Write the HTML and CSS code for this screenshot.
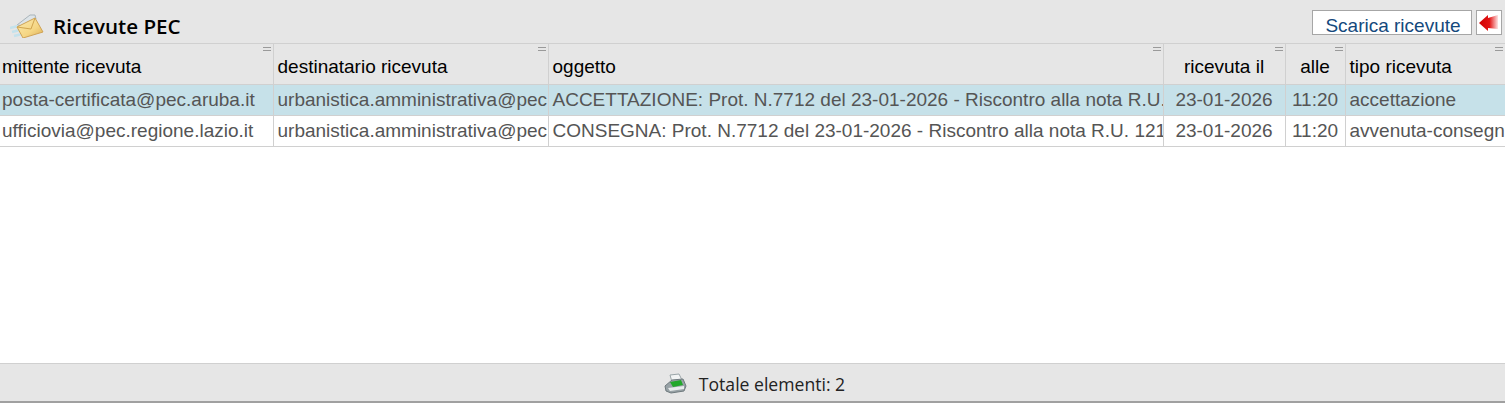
FILE: index.html
```html
<!DOCTYPE html>
<html lang="it">
<head>
    <meta charset="UTF-8">
    <meta name="viewport" content="width=device-width, initial-scale=1.0">
    <title>Ricevute PEC</title>
    <link rel="stylesheet" href="styles.css">
</head>
<body>
    <div class="title-bar">
        <svg class="title-icon" width="34" height="26" viewBox="0 0 34 26">
            <defs>
                <linearGradient id="env" x1="0" y1="0" x2="1" y2="1">
                    <stop offset="0" stop-color="#fbeab0"/>
                    <stop offset="0.6" stop-color="#f5d684"/>
                    <stop offset="1" stop-color="#dcae55"/>
                </linearGradient>
            </defs>
            <path d="M7 13 L20 3 L25 3 L26 7 L14 14 Z" fill="#dde4e8" stroke="#a9b4ba" stroke-width="1"/>
            <path d="M0 16 L8 14 M2 20 L10 18 M4 24 L12 22" stroke="#c4e2ec" stroke-width="2.5" fill="none"/>
            <path d="M7 15 L25 6 L33 20 L13 26 Z" fill="url(#env)" stroke="#cfa356" stroke-width="1"/>
            <path d="M7 15 L21 17 L25 6" fill="none" stroke="#d0a44e" stroke-width="1"/>
        </svg>
        <h1 class="title">Ricevute PEC</h1>
        <div class="title-actions">
            <button class="btn-download">Scarica ricevute</button>
            <button class="btn-back">
                <svg width="20" height="18" viewBox="0 0 20 18">
                    <defs>
                        <linearGradient id="arrow" x1="0" y1="0" x2="1" y2="0">
                            <stop offset="0" stop-color="#d00000"/>
                            <stop offset="0.55" stop-color="#e21414"/>
                            <stop offset="1" stop-color="#fde3e3"/>
                        </linearGradient>
                    </defs>
                    <path d="M0 9 L9 1 L9 4 L19 1 L19 15 L9 14 L9 17 Z" fill="url(#arrow)"/>
                </svg>
            </button>
        </div>
    </div>

    <div class="list">
        <table class="grid">
            <colgroup>
                <col class="col-from">
                <col class="col-to">
                <col class="col-subject">
                <col class="col-date">
                <col class="col-time">
                <col class="col-type">
            </colgroup>
            <thead>
                <tr>
                    <th><span class="handle"></span>mittente ricevuta</th>
                    <th><span class="handle"></span>destinatario ricevuta</th>
                    <th><span class="handle"></span>oggetto</th>
                    <th class="center"><span class="handle"></span>ricevuta il</th>
                    <th class="center"><span class="handle"></span>alle</th>
                    <th><span class="handle"></span>tipo ricevuta</th>
                </tr>
            </thead>
            <tbody>
                <tr class="selected">
                    <td>posta-certificata@pec.aruba.it</td>
                    <td>urbanistica.amministrativa@pec</td>
                    <td>ACCETTAZIONE: Prot. N.7712 del 23-01-2026 - Riscontro alla nota R.U.</td>
                    <td class="center">23-01-2026</td>
                    <td class="center">11:20</td>
                    <td>accettazione</td>
                </tr>
                <tr>
                    <td>ufficiovia@pec.regione.lazio.it</td>
                    <td>urbanistica.amministrativa@pec</td>
                    <td>CONSEGNA: Prot. N.7712 del 23-01-2026 - Riscontro alla nota R.U. 121</td>
                    <td class="center">23-01-2026</td>
                    <td class="center">11:20</td>
                    <td>avvenuta-consegn</td>
                </tr>
            </tbody>
        </table>
    </div>

    <div class="status-bar">
        <svg width="24" height="22" viewBox="0 0 24 22">
            <path d="M7 2 L16 1 L19 7 L9 9 Z" fill="#f2f4f4" stroke="#9aa5a8" stroke-width="1"/>
            <path d="M2 13 L9 7 L20 6 L23 13 L21 18 L8 20 L3 18 Z" fill="#98a2a6" stroke="#6f7a7e" stroke-width="1"/>
            <path d="M7 9 L18 7 L20 12 L10 14 Z" fill="#22a82b"/>
            <path d="M5 15 L21 13 L21 16 L7 18 Z" fill="#e8ecec"/>
        </svg>
        <span class="status-text">Totale elementi: 2</span>
    </div>
</body>
</html>
```

FILE: styles.css
```css
html, body {
    height: 100%;
}

body {
    display: flex;
    flex-direction: column;
    margin: 0;
    background-color: #fff;
    font-family: "Liberation Sans", Arial, sans-serif;
}

.title-bar {
    display: flex;
    align-items: center;
    height: 43px;
    padding-left: 10px;
    background-color: #e6e6e6;
    border-bottom: 1px solid #d0d0d0;
}

.title-icon {
    margin-top: 6px;
}

.title {
    margin: 8px 0 0 9px;
    font-family: "Open Sans", "Noto Sans", sans-serif;
    font-size: 20.6px;
    font-weight: 600;
    color: #000;
}

.title-actions {
    display: flex;
    gap: 4px;
    margin-left: auto;
    margin-top: 2px;
    padding-right: 3px;
}

.btn-download {
    width: 160px;
    height: 25px;
    padding: 5px 0 0 2px;
    background-color: #fff;
    border: 1px solid #a6a6a6;
    font-family: inherit;
    font-size: 19px;
    line-height: 20px;
    color: #14497c;
}

.btn-back {
    display: flex;
    align-items: center;
    justify-content: center;
    width: 26px;
    height: 25px;
    padding: 0;
    background-color: #fff;
    border: 1px solid #a6a6a6;
}

.list {
    flex: 1;
    overflow: hidden;
}

.grid {
    width: 1505px;
    table-layout: fixed;
    border-collapse: collapse;
    font-size: 19px;
}

.col-from { width: 273px; }
.col-to { width: 275px; }
.col-subject { width: 615px; }
.col-date { width: 122px; }
.col-time { width: 60px; }
.col-type { width: 160px; }

.grid th, .grid td {
    padding: 0 2px;
    overflow: hidden;
    white-space: nowrap;
    text-align: left;
    border-right: 1px solid #d0d0d0;
    border-bottom: 1px solid #d0d0d0;
}

.grid th:last-child, .grid td:last-child {
    border-right: none;
}

.grid th {
    position: relative;
    height: 40px;
    padding-top: 7px;
    box-sizing: border-box;
    background-color: #e6e6e6;
    font-weight: normal;
    color: #000;
}

.grid td {
    height: 30px;
    color: #555;
}

.grid td:nth-child(3), .grid th:nth-child(3),
.grid td:nth-child(2), .grid th:nth-child(2),
.grid td:nth-child(6), .grid th:nth-child(6) {
    padding-left: 4px;
    padding-right: 0;
}

.grid .center {
    text-align: center;
}

.selected td {
    background-color: #c6e1e9;
}

/* piccolo segno di ridimensionamento colonna */
.handle {
    position: absolute;
    top: 3px;
    right: 2px;
    width: 8px;
    height: 2px;
    border-top: 1px solid #9a9a9a;
    border-bottom: 1px solid #9a9a9a;
}

.status-bar {
    display: flex;
    align-items: center;
    justify-content: center;
    gap: 12px;
    height: 34px;
    padding-top: 3px;
    padding-left: 3px;
    background-color: #e6e6e6;
    border-top: 1px solid #d0d0d0;
    border-bottom: 2px solid #a0a0a0;
}

.status-text {
    font-family: "Open Sans", "Noto Sans", sans-serif;
    font-size: 17.6px;
    color: #222;
}
```
